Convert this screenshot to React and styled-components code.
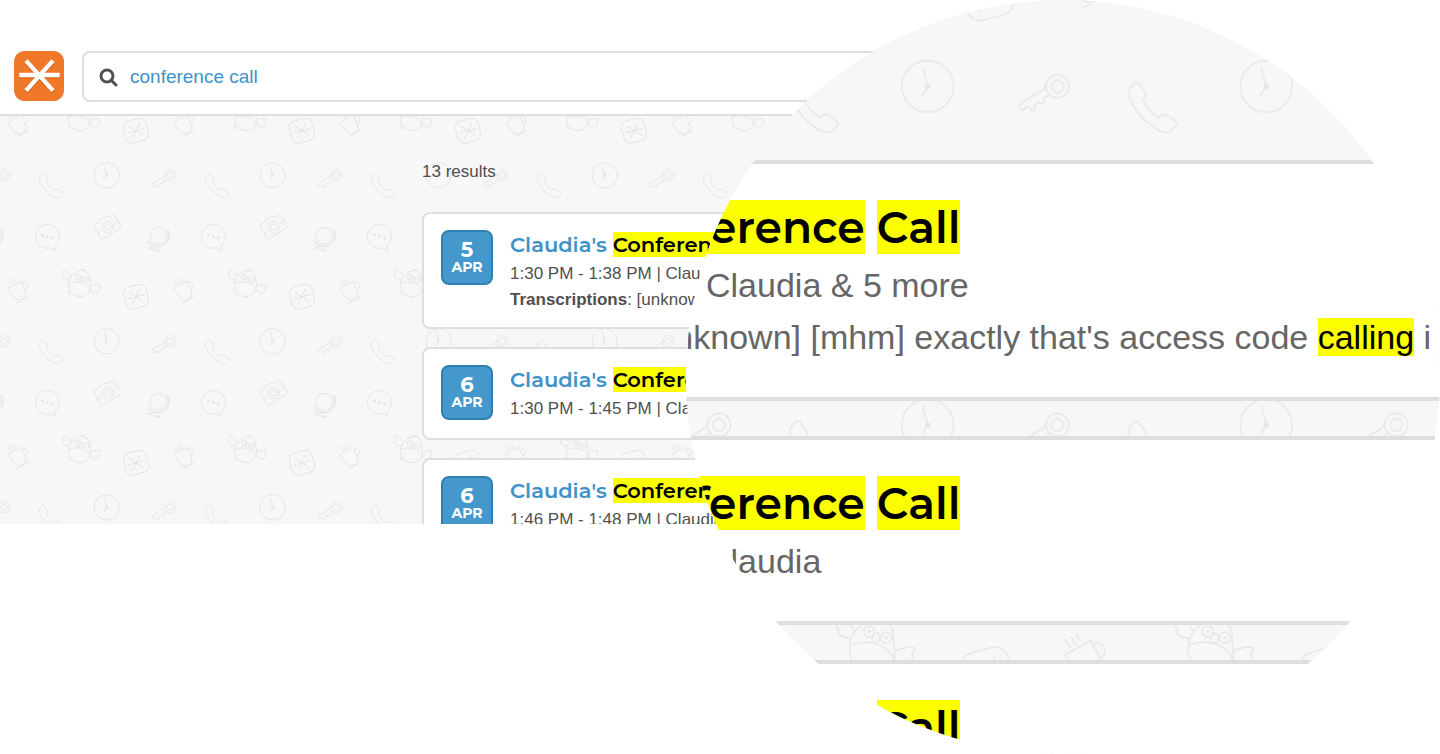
import { useId } from 'react'
import styled, { createGlobalStyle } from 'styled-components'

const Colors = {
    Orange: '#f07829',
    Blue: '#4598cb',
    BlueDark: '#2f80b0',
    Link: '#3e92c8',
    Text: '#505050',
    TextSoft: '#666666',
    Border: '#dedede',
    Ground: '#f7f7f7',
    Doodle: '#e5e5e5',
    Highlight: '#fbff00',
    White: '#ffffff',
}

const bodyFont = "'Liberation Sans', Arial, sans-serif"
const titleFont = "Montserrat, Inter, sans-serif"

const GlobalStyle = createGlobalStyle`
    * {
        box-sizing: border-box;
    }

    body {
        margin: 0;
        background: ${Colors.White};
        font-family: ${bodyFont};
        overflow: hidden;
    }
`

const Page = styled.main`
    position: relative;
    min-height: 100vh;
    overflow: hidden;
`

const Screen = styled.div`
    width: 74%;
`

const Header = styled.header`
    display: flex;
    align-items: flex-start;
    gap: 18px;
    padding: 51px 0 12px 14px;
    background: ${Colors.White};
    border-bottom: 2px solid ${Colors.Border};
`

const LogoLink = styled.a`
    display: block;
    width: 50px;
    height: 50px;
`

const SearchBox = styled.label`
    flex: 1;
    display: flex;
    align-items: center;
    gap: 12px;
    height: 51px;
    padding: 0 15px;
    border: 2px solid ${Colors.Border};
    border-radius: 8px;
`

const SearchInput = styled.input`
    flex: 1;
    border: none;
    outline: none;
    padding: 0;
    background: none;
    font-family: ${bodyFont};
    font-size: 19px;
    line-height: 24px;
    color: ${Colors.Link};
`

const ResultsArea = styled.section`
    position: relative;
    max-height: 408px;
    padding: 40px 0 0 422px;
    background: ${Colors.Ground};
    overflow: hidden;
`

const DoodleCanvas = styled.svg`
    position: absolute;
    inset: 0;
    width: 100%;
    height: 100%;
`

const ResultsCount = styled.p`
    position: relative;
    margin: 0;
    padding: 1px 0 25px;
    font-size: 17px;
    line-height: 30px;
    color: ${Colors.Text};
`

const CardList = styled.div`
    position: relative;
    display: flex;
    flex-direction: column;
    gap: ${({ $large }) => ($large ? 35 : 18)}px;
`

const Card = styled.article`
    display: flex;
    align-items: flex-start;
    gap: 17px;
    min-height: 93px;
    padding: 16px 16px 14px 17px;
    background: ${Colors.White};
    border: 2px solid ${Colors.Border};
    border-radius: 8px;
`

const DateBadge = styled.time`
    flex: none;
    display: flex;
    flex-direction: column;
    align-items: center;
    width: 52px;
    height: 55px;
    padding-top: 8px;
    background: ${Colors.Blue};
    border: 2px solid ${Colors.BlueDark};
    border-radius: 8px;
    color: ${Colors.White};
    font-family: ${titleFont};
    font-weight: 700;
`

const Day = styled.span`
    font-size: 21px;
    line-height: 20px;
`

const Month = styled.span`
    font-size: 14px;
    line-height: 14px;
`

const CardBody = styled.div`
    white-space: nowrap;
`

const Title = styled.h2`
    margin: 0;
    font-family: ${titleFont};
    font-size: 21px;
    font-weight: 600;
    line-height: 30px;
`

const TitleLink = styled.a`
    color: ${Colors.Link};
    text-decoration: none;
`

const CardTitle = styled(Title)`
    padding-bottom: 1px;
`

const Line = styled.p`
    margin: 0;
    font-size: 17px;
    line-height: 26px;
    color: ${Colors.Text};
`

const Highlight = styled.mark`
    background: ${Colors.Highlight};
    color: #000000;
`

const Lens = styled.div`
    position: absolute;
    top: 0;
    right: 0;
    height: 100vh;
    aspect-ratio: 1;
    padding-top: 160px;
    border-radius: 50%;
    background: ${Colors.Ground};
    overflow: hidden;
`

const LensCard = styled.article`
    padding: 32px 0 34px;
    background: ${Colors.White};
    border: solid ${Colors.Border};
    border-width: 4px 0;
    white-space: nowrap;
`

const LensTitle = styled(Title)`
    margin-left: -82px;
    font-size: 44px;
    line-height: 63px;
`

const LensLine = styled(Line)`
    margin-left: 20px;
    font-size: 34px;
    line-height: 52px;
    color: ${Colors.TextSoft};
`

const LensSnippet = styled(LensLine)`
    margin-left: -40px;
`

const Key = ({ x }) => (
    <g transform={`translate(${x} 424)`}>
        <circle r="17" />
        <circle r="9" />
        <path d="M-16 -4L-20 4L-54 25Q-58 29 -54 33L-50 35L-46 30L-41 31L-38 37L-34 34L-34 28L-27 23L-23 26L-19 22L-20 17L-12 12" />
    </g>
)

const Globe = ({ x }) => (
    <g transform={`translate(${x} 107)`}>
        <circle r="25" />
        <path d="M25 -18A31 31 0 0 1 -23 21L-31 15M25 -18L30 -18A36 36 0 0 1 -26 25L-31 15M-12 31L-9 36L6 48L-31 37L-15 34" />
    </g>
)

function Doodles({ scale, x, y, stroke }) {
    const id = useId()

    return (
        <DoodleCanvas aria-hidden="true">
            <defs>
                <pattern id={id} width="498" height="498" patternUnits="userSpaceOnUse" patternTransform={`translate(${x} ${y}) scale(${scale})`}>
                    <g fill="none" stroke={Colors.Doodle} strokeWidth={stroke} strokeLinecap="round" strokeLinejoin="round">
                        {/* speech bubble */}
                        <path d="M152 144A36 36 0 1 1 164 138L168 152Z" />
                        <g fill={Colors.Doodle}>
                            <circle cx="127" cy="105" r="3" />
                            <circle cx="142" cy="109" r="3" />
                            <circle cx="157" cy="114" r="3" />
                        </g>

                        {/* camera */}
                        <path d="M284 73L295 68Q298 59 305 56L318 51Q325 50 331 49L339 44Q342 43 344 46L364 79Q366 82 362 84L308 117Q304 119 302 116L282 79Q281 75 284 73Z" />
                        <circle cx="323" cy="81" r="17" />
                        <circle cx="323" cy="81" r="9" />
                        <path d="M294 98L302 94M345 69L353 65" />

                        <Globe x={475} />
                        <Globe x={-23} />

                        {/* cup */}
                        <path d="M24 264L62 243L75 268Q82 287 70 296Q54 304 42 293ZM64 249Q74 242 82 253Q86 268 74 269M50 309L85 289" />
                        <path d="M24 242Q28 244 28 248T33 252M32 238Q36 240 36 244T41 248M40 234Q44 236 44 240T48 244" />

                        {/* owl */}
                        <path d="M213 230Q224 215 243 211Q263 211 269 230L272 262Q270 287 242 290Q207 288 205 257Q205 240 213 230Z" />
                        <path d="M243 211Q242 206 250 208Q257 210 257 215M206 251Q220 242 246 248Q266 256 271 272" />
                        <circle cx="234" cy="230" r="8" />
                        <circle cx="259" cy="239" r="8" />
                        <circle cx="234" cy="230" r="1" />
                        <circle cx="259" cy="239" r="1" />
                        <ellipse cx="244" cy="240" rx="5" ry="8" transform="rotate(20 244 240)" />
                        <path d="M213 229Q203 213 196 210Q187 207 189 217Q183 222 189 226Q186 236 198 238L207 240" />
                        <path d="M273 258Q291 250 300 254Q303 261 296 263Q304 267 296 270Q298 279 286 279Q276 277 272 271" />
                        <path d="M206 273Q202 282 213 283M234 289Q237 296 245 289" />

                        {/* app tile */}
                        <g transform="translate(408 290) rotate(-15)">
                            <rect x="-35" y="-34" width="70" height="68" rx="20" />
                            <path d="M-26 0H26M-17 -19L17 19M17 -19L-17 19" />
                        </g>

                        {/* clock */}
                        <circle cx="320" cy="424" r="38" />
                        <path d="M313 396L320 424L312 438" />
                        <circle cx="320" cy="424" r="3" fill={Colors.Doodle} />

                        <Key x={511} />
                        <Key x={13} />

                        {/* phone */}
                        <path d="M126 420Q130 417 134 421L142 433Q145 438 139 443Q138 450 161 470Q166 464 174 466L186 474Q190 478 187 482L178 491Q172 494 160 488Q132 471 118 440Q116 432 120 426Z" />
                    </g>
                </pattern>
            </defs>
            <rect width="100%" height="100%" fill={`url(#${id})`} />
        </DoodleCanvas>
    )
}

const Logo = () => (
    <svg width="50" height="50" viewBox="0 0 150 150" aria-hidden="true">
        <rect width="150" height="150" rx="32" fill={Colors.Orange} />
        <g fill="none" strokeWidth="13">
            <path d="M16 76H137M36 33L117 123M117 33L36 123" stroke="#d9631a" />
            <path d="M16 72H137M36 29L117 119M117 29L36 119" stroke={Colors.White} />
        </g>
    </svg>
)

const SearchIcon = () => (
    <svg width="19" height="20" viewBox="0 0 19 20" fill="none" stroke={Colors.Text} aria-hidden="true">
        <circle cx="8" cy="9" r="6" strokeWidth="3" />
        <path d="M12 13L17 18" strokeWidth="3" strokeLinecap="round" />
    </svg>
)

const results = [
    { day: 5, time: '1:30 PM - 1:38 PM', others: 5, transcribed: true },
    { day: 6, time: '1:30 PM - 1:45 PM' },
    { day: 6, time: '1:46 PM - 1:48 PM' },
]

const ResultCard = ({ day, time, transcribed }) => (
    <Card>
        <DateBadge>
            <Day>{day}</Day>
            <Month>APR</Month>
        </DateBadge>
        <CardBody>
            <CardTitle>
                <TitleLink href="#">
                    Claudia's <Highlight>Conference</Highlight>
                </TitleLink>
            </CardTitle>
            <Line>{time} | Claudia</Line>
            {transcribed && <Line><b>Transcriptions</b>: [unknown]</Line>}
        </CardBody>
    </Card>
)

const LensResult = ({ others, transcribed }) => (
    <LensCard>
        <LensTitle>
            <Highlight>Conference</Highlight> <Highlight>Call</Highlight>
        </LensTitle>
        <LensLine>Claudia{others && ` & ${others} more`}</LensLine>
        {transcribed && (
            <LensSnippet>
                [unknown] [mhm] exactly that's access code <Highlight>calling</Highlight> i
            </LensSnippet>
        )}
    </LensCard>
)

export default function App() {
    return (
        <Page>
            <GlobalStyle />
            <Screen>
                <Header>
                    <LogoLink href="#" aria-label="Home">
                        <Logo />
                    </LogoLink>
                    <SearchBox>
                        <SearchIcon />
                        <SearchInput type="text" aria-label="Search" defaultValue="conference call" />
                    </SearchBox>
                </Header>
                <ResultsArea>
                    <Doodles scale={1 / 3} x={0} y={84} stroke={3} />
                    <ResultsCount>13 results</ResultsCount>
                    <CardList>
                        {results.map((result) => (
                            <ResultCard key={result.time} {...result} />
                        ))}
                    </CardList>
                </ResultsArea>
            </Screen>
            <Lens>
                <Doodles scale={0.68} x={24} y={-202} stroke={2} />
                <CardList $large>
                    {results.map((result) => (
                        <LensResult key={result.time} {...result} />
                    ))}
                </CardList>
            </Lens>
        </Page>
    )
}
